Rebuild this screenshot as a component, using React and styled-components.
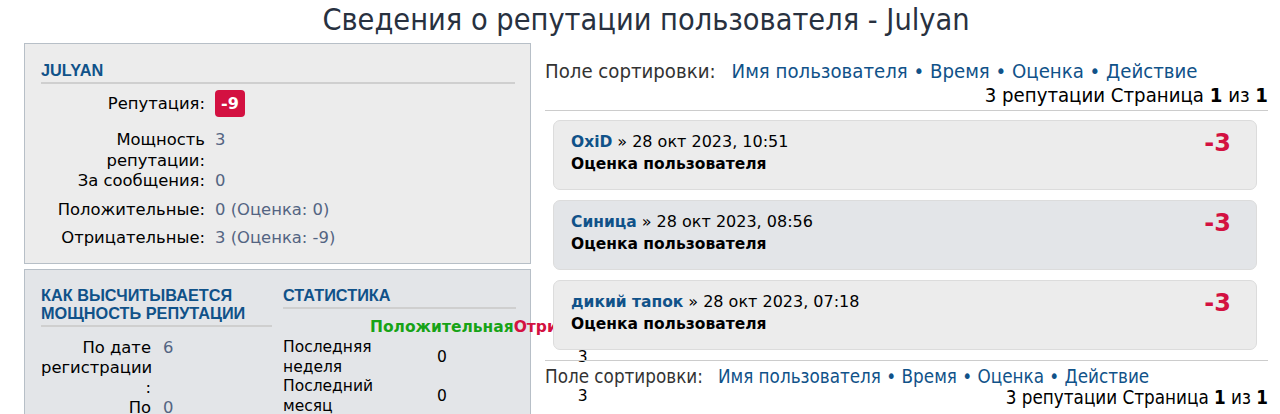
import React from 'react'
import styled, { createGlobalStyle, css } from 'styled-components'

const GlobalStyle = createGlobalStyle`
  body {
    margin: 0;
    background: #fff;
    font-family: 'DejaVu Sans', Verdana, sans-serif;
    color: #000;
  }
`

const Page = styled.div`
  padding: 0 12px 0 24px;
`

const Title = styled.h2`
  margin: 0 0 6px;
  height: 37px;
  line-height: 40px;
  text-align: center;
  font-family: 'DejaVu Sans Condensed', 'DejaVu Sans', sans-serif;
  font-weight: normal;
  font-size: 30.4px;
  color: #28313f;
`

const Columns = styled.div`
  display: flex;
  align-items: flex-start;
`

const Sidebar = styled.div`
  width: 507px;
  flex: none;
`

const Main = styled.div`
  flex: 1;
  margin-left: 14px;
  padding-top: 16px;
`

const Panel = styled.div`
  border: 1px solid #b7bfc7;
  background: ${props => props.alt ? '#e3e5e8' : '#ececec'};
  padding: ${props => props.top || 16}px 15px ${props => props.bottom || 15}px 16px;
  margin-bottom: 5px;
`

const Heading = styled.h3`
  margin: 0;
  padding-bottom: 3px;
  border-bottom: 2px solid #cfcfcf;
  font-family: 'Liberation Sans', Arial, sans-serif;
  font-weight: bold;
  font-size: 16.3px;
  line-height: 18px;
  text-transform: uppercase;
  color: #105289;
`

const Details = styled.div`
  display: grid;
  grid-template-columns: ${props => props.label || 164}px 1fr;
  column-gap: ${props => props.gap || 10}px;
  margin-top: ${props => props.top || 0}px;
  font-size: 16.4px;
  line-height: ${props => props.lh || 20}px;
`

const Label = styled.div`
  text-align: right;
  color: #000;

  ${props => props.badge && css`
    line-height: 27px;
  `}
`

const Value = styled.div`
  color: #536482;
`

const Badge = styled.span`
  display: inline-block;
  padding: 0 6px;
  height: 27px;
  line-height: 27px;
  border-radius: 4px;
  background: #d31141;
  color: #fff;
  font-weight: bold;
  font-size: 16px;
`

const Split = styled.div`
  display: grid;
  grid-template-columns: 231px 233px;
  column-gap: 11px;
`

const StatsTable = styled.div`
  display: grid;
  grid-template-columns: 87px max-content max-content;
  margin-top: 9px;
  font-size: 15.5px;
  line-height: 19.5px;
`

const StatHead = styled.div`
  padding-bottom: 1px;
  font-weight: bold;
  text-align: center;
  color: ${props => props.negative ? '#d31141' : '#17a317'};
`

const StatValue = styled.div`
  display: flex;
  align-items: center;
  justify-content: center;
`

const SortBar = styled.div`
  font-family: 'DejaVu Sans Condensed', 'DejaVu Sans', sans-serif;
  font-size: ${props => props.small ? 18.7 : 20.2}px;
  line-height: ${props => props.small ? 21 : 24}px;
  color: #333;
`

const SortLinks = styled.span`
  margin-left: ${props => props.space}px;
  color: #105289;
`

const Pagination = styled.div`
  text-align: right;
  color: #000;

  b {
    font-weight: bold;
  }
`

const Rule = styled.hr`
  border: 0;
  border-top: 1px solid #cccccc;
  margin: ${props => props.margin};
`

const Card = styled.div`
  position: relative;
  height: 70px;
  box-sizing: border-box;
  margin: 0 11px 10px 8px;
  padding: 10px 17px 0;
  border: 1px solid #dcdcdc;
  border-radius: 7px;
  background: ${props => props.alt ? '#e3e5e8' : '#ececec'};
  font-size: 15.5px;
  line-height: 22px;
`

const Author = styled.a`
  color: #105289;
  font-weight: bold;
  text-decoration: none;
`

const Stamp = styled.span`
  font-size: 16px;
`

const Reason = styled.div`
  font-weight: bold;
`

const Points = styled.div`
  position: absolute;
  top: 11px;
  right: 25px;
  font-size: 24px;
  font-weight: bold;
  color: #d31141;
`

const entries = [
  { user: 'OxiD', date: '28 окт 2023, 10:51' },
  { user: 'Синица', date: '28 окт 2023, 08:56', alt: true },
  { user: 'дикий тапок', date: '28 окт 2023, 07:18' }
]

const Sort = ({ small, space }) => (
  <SortBar small={small}>
    <div>
      Поле сортировки:
      <SortLinks space={space}>Имя пользователя • Время • Оценка • Действие</SortLinks>
    </div>
    <Pagination>3 репутации Страница <b>1</b> из <b>1</b></Pagination>
  </SortBar>
)

export default function App() {
  return (
    <Page>
      <GlobalStyle />
      <Title>Сведения о репутации пользователя - Julyan</Title>
      <Columns>
        <Sidebar>
          <Panel top={17}>
            <Heading>Julyan</Heading>
            <Details top={6}>
              <Label badge>Репутация:</Label>
              <Value><Badge>-9</Badge></Value>
            </Details>
            <Details top={13} lh={20.5}>
              <Label>Мощность репутации:</Label>
              <Value>3</Value>
              <Label>За сообщения:</Label>
              <Value>0</Value>
            </Details>
            <Details top={8}>
              <Label>Положительные:</Label>
              <Value>0 (Оценка: 0)</Value>
            </Details>
            <Details top={8}>
              <Label>Отрицательные:</Label>
              <Value>3 (Оценка: -9)</Value>
            </Details>
          </Panel>
          <Panel alt bottom={20}>
            <Split>
              <div>
                <Heading>Как высчитывается мощность репутации</Heading>
                <Details top={11} label={110} gap={12}>
                  <Label>По дате регистрации :</Label>
                  <Value>6</Value>
                  <Label>По сообщениям :</Label>
                  <Value>0</Value>
                </Details>
              </div>
              <div>
                <Heading>Статистика</Heading>
                <StatsTable>
                  <div />
                  <StatHead>Положительная</StatHead>
                  <StatHead negative>Отрицательная</StatHead>
                  <div>Последняя неделя</div>
                  <StatValue>0</StatValue>
                  <StatValue>3</StatValue>
                  <div>Последний месяц</div>
                  <StatValue>0</StatValue>
                  <StatValue>3</StatValue>
                </StatsTable>
              </div>
            </Split>
          </Panel>
        </Sidebar>
        <Main>
          <Sort space={16} />
          <Rule margin="3px 0 9px" />
          {entries.map(e => (
            <Card key={e.user} alt={e.alt}>
              <Author>{e.user}</Author> <Stamp>» {e.date}</Stamp>
              <Reason>Оценка пользователя</Reason>
              <Points>-3</Points>
            </Card>
          ))}
          <Rule margin="0 0 5px" />
          <Sort small space={15} />
        </Main>
      </Columns>
    </Page>
  )
}
